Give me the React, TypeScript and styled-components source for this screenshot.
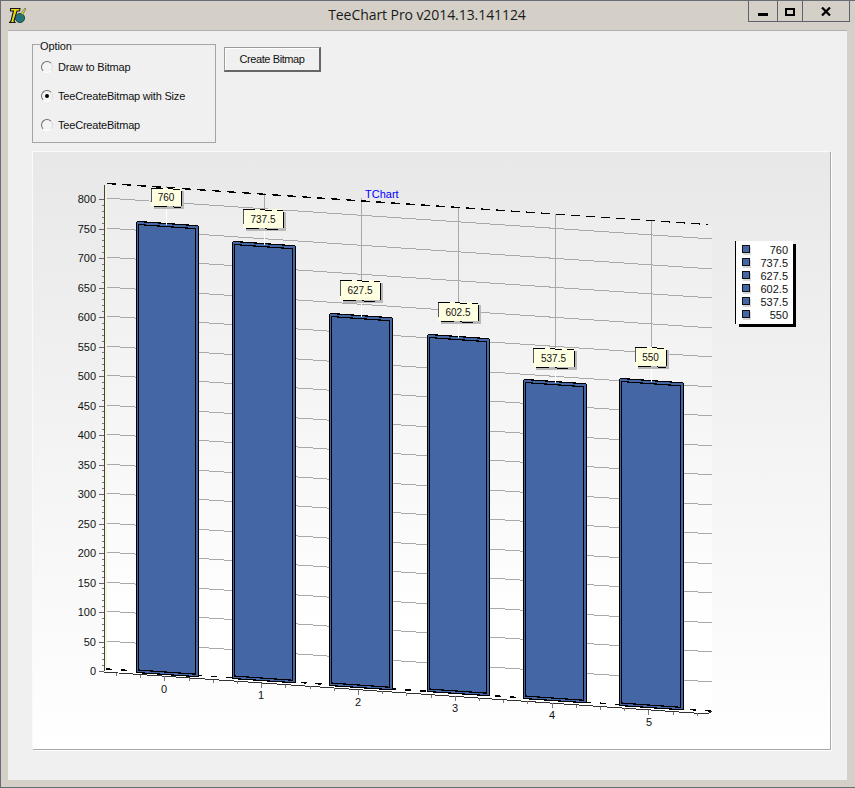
import {FC} from 'react';
import styled, {createGlobalStyle} from 'styled-components';

const GlobalStyle = createGlobalStyle`
  html, body {
    margin: 0;
    padding: 0;
    background: #d4d0c8;
  }
`;

const UI_FONT = `'Liberation Sans', Arial, sans-serif`;
const BAR_BLUE = '#4466a4';
const GRID_GREY = '#a9a9a9';

const OPTIONS = [
  {label: 'Draw to Bitmap', checked: false},
  {label: 'TeeCreateBitmap with Size', checked: true},
  {label: 'TeeCreateBitmap', checked: false},
];

// All chart coordinates are page coordinates, the svg viewBox starts at the panel's inner corner
const ox = 33;
const oy = 152;

interface BarSpec {
  value: string;
  left: number;
  right: number;
  top: number;
  bottom: number;
  tickX: number;
  tickY: number;
  box: [number, number, number, number];
  stem: number;
  wallTop: number;
}

const BARS: BarSpec[] = [
  {value: '760', left: 136, right: 198, top: 223, bottom: 672, tickX: 164, tickY: 693, box: [151, 188, 181, 206], stem: 166, wallTop: 186},
  {value: '737.5', left: 232, right: 295, top: 243, bottom: 678, tickX: 261, tickY: 699, box: [243, 209, 283, 228], stem: 264, wallTop: 193},
  {value: '627.5', left: 329, right: 392, top: 315, bottom: 685, tickX: 358, tickY: 706, box: [340, 280, 380, 300], stem: 361, wallTop: 198},
  {value: '602.5', left: 427, right: 489, top: 336, bottom: 691, tickX: 455, tickY: 712, box: [438, 302, 478, 321], stem: 458, wallTop: 207},
  {value: '537.5', left: 523, right: 586, top: 381, bottom: 698, tickX: 552, tickY: 719, box: [533, 348, 574, 367], stem: 555, wallTop: 214},
  {value: '550', left: 619, right: 683, top: 380, bottom: 705, tickX: 649, tickY: 726, box: [635, 347, 666, 366], stem: 651, wallTop: 220},
];

const yFor = (v: number) => Math.round(671 - (v / 800) * 472);
const SLOPE = 0.0675;

const YAxis: FC = () => {
  const majors = Array.from({length: 17}, (_, i) => i * 50);
  const minors = Array.from({length: 80}, (_, i) => i * 10).filter(v => v % 50 !== 0);
  return (
    <g shapeRendering="crispEdges">
      <rect x={105 - ox} y={186 - oy} width={2} height={484} fill="#f6f3d8" />
      <line x1={104.5 - ox} y1={185 - oy} x2={104.5 - ox} y2={672 - oy} stroke="#444" />
      {majors.map(v => (
        <g key={v}>
          <line x1={99 - ox} y1={yFor(v) - oy + 0.5} x2={104 - ox} y2={yFor(v) - oy + 0.5} stroke="#666" />
          <ChartText x={96 - ox} y={yFor(v) - oy + 4} textAnchor="end">
            {v}
          </ChartText>
        </g>
      ))}
      {minors.map(v => (
        <line key={v} x1={102 - ox} y1={yFor(v) - oy + 0.5} x2={104 - ox} y2={yFor(v) - oy + 0.5} stroke="#777" />
      ))}
    </g>
  );
};

const GridLines: FC = () => (
  <g shapeRendering="crispEdges">
    {Array.from({length: 16}, (_, i) => (i + 1) * 50).map(v => {
      const y = yFor(v) - 1;
      return (
        <line
          key={v}
          x1={105 - ox}
          y1={y - oy}
          x2={712 - ox}
          y2={y + 607 * SLOPE - oy}
          stroke={GRID_GREY}
        />
      );
    })}
    {BARS.map(b => (
      <line
        key={b.value}
        x1={b.stem + 0.5 - ox}
        y1={b.wallTop - oy}
        x2={b.stem + 0.5 - ox}
        y2={b.box[1] - oy}
        stroke={GRID_GREY}
      />
    ))}
  </g>
);

const Floor: FC = () => {
  const ticks = Array.from({length: 25}, (_, i) => 116.5 + i * 24.2);
  return (
    <g shapeRendering="crispEdges">
      <polygon
        points={`${105 - ox},${670 - oy} ${712 - ox},${711 - oy} ${708 - ox},${715 - oy} ${104 - ox},${672 - oy}`}
        fill="#fff"
      />
      <line
        x1={106 - ox}
        y1={669 - oy}
        x2={712 - ox}
        y2={711 - oy}
        stroke="#000"
        strokeWidth={1.6}
        strokeDasharray="6 9"
      />
      <line x1={104 - ox} y1={672 - oy} x2={708 - ox} y2={714 - oy} stroke="#333" />
      <line x1={708 - ox} y1={714 - oy} x2={712 - ox} y2={711 - oy} stroke="#333" />
      {ticks.map((x, i) => {
        const y = 672 + (x - 104) * 0.0695;
        const major = (i - 2) % 4 === 0;
        return (
          <line
            key={x}
            x1={x - ox}
            y1={y - oy}
            x2={x - ox}
            y2={y + (major ? 5 : 3) - oy}
            stroke="#777"
          />
        );
      })}
    </g>
  );
};

const Bar: FC<{bar: BarSpec}> = ({bar}) => {
  const l = bar.left - ox;
  const r = bar.right - ox;
  const t = bar.top - oy;
  const b = bar.bottom - oy;
  const rise = (r - l) * 0.068;
  const height = b - t;
  return (
    <g shapeRendering="crispEdges">
      <polygon
        points={`${l + 2},${t - 1} ${r + 1},${t - 1 + rise} ${r + 1},${b + rise + 1} ${l},${b + 1} ${l},${t}`}
        fill={BAR_BLUE}
      />
      <rect x={l} y={t} width={1} height={height} fill="#000" />
      <rect x={l + 2} y={t + 1} width={1} height={height - 3} fill="#000" />
      <rect x={r - 3} y={t + rise + 1} width={1} height={height - 3} fill="#000" />
      <rect x={r} y={t + rise - 1} width={1} height={height + 2} fill="#000" />
      <g stroke="#000" strokeWidth={1.2}>
        <line x1={l} y1={t - 0.5} x2={l + 2} y2={t - 1.5} />
        <line x1={l + 2} y1={t - 1.5} x2={r} y2={t - 1.5 + rise} />
        <line x1={l + 2} y1={t + 1.5} x2={r - 2} y2={t + 1.5 + rise} />
        <line x1={l} y1={b + 0.5} x2={r} y2={b + 0.5 + rise} />
        <line x1={l + 2} y1={b - 2} x2={r - 2} y2={b - 2 + rise} />
      </g>
    </g>
  );
};

const ValueLabel: FC<{bar: BarSpec}> = ({bar}) => {
  const [x1, y1, x2, y2] = bar.box;
  const x = x1 - ox;
  const y = y1 - oy;
  const w = x2 - x1;
  const h = y2 - y1;
  const rise = w * 0.045;
  return (
    <g>
      <g shapeRendering="crispEdges">
        <line x1={bar.stem + 0.5 - ox} y1={y + h} x2={bar.stem + 0.5 - ox} y2={bar.top + 2 - oy} stroke="#fff" />
        <rect x={x + 3} y={y + 3} width={w} height={h} fill="#b9b9b9" />
        <rect x={x} y={y} width={w} height={h} fill="#ffffe1" />
        <line x1={x + 0.5} y1={y} x2={x + 0.5} y2={y + h - 4} stroke="#555" />
        <line x1={x + w + 0.5} y1={y + 3} x2={x + w + 0.5} y2={y + h} stroke="#000" />
        <line x1={x} y1={y} x2={x + w} y2={y + rise} stroke="#000" strokeDasharray="12 5" />
        <line x1={x + 3} y1={y + h} x2={x + w} y2={y + h + rise} stroke="#000" strokeDasharray="13 6" />
      </g>
      <LabelText x={x + w / 2} y={y + h / 2 + 4} textAnchor="middle">
        {bar.value}
      </LabelText>
    </g>
  );
};

const Legend: FC = () => {
  const x = 736 - ox;
  const y = 241 - oy;
  return (
    <g shapeRendering="crispEdges">
      <rect x={x + 3} y={y + 3} width={57} height={83} fill="#000" />
      <rect x={x} y={y} width={57} height={83} fill="#fff" />
      <line x1={x - 0.5} y1={y} x2={x - 0.5} y2={y + 83} stroke="#000" />
      {BARS.map((b, i) => {
        const cy = 250 + i * 13 - oy;
        return (
          <g key={b.value}>
            <rect x={x + 7} y={cy - 3} width={8} height={8} fill="#d8d8d8" />
            <rect x={x + 6.5} y={cy - 4.5} width={7} height={7} fill={BAR_BLUE} stroke="#111" />
            <ChartText x={788 - ox} y={cy + 4} textAnchor="end">
              {b.value}
            </ChartText>
          </g>
        );
      })}
    </g>
  );
};

const TeeChart: FC = () => (
  <ChartSvg width={797} height={597} viewBox="0 0 797 597">
    <defs>
      <linearGradient id="wall" x1="0" y1="0" x2="0" y2="1">
        <stop offset="0" stopColor="#ececec" />
        <stop offset="0.85" stopColor="#ffffff" />
        <stop offset="1" stopColor="#ffffff" />
      </linearGradient>
    </defs>
    <polygon
      points={`${105 - ox},${185 - oy} ${712 - ox},${226 - oy} ${712 - ox},${711 - oy} ${105 - ox},${670 - oy}`}
      fill="url(#wall)"
    />
    <GridLines />
    <line
      x1={107 - ox}
      y1={183.5 - oy}
      x2={708 - ox}
      y2={224.5 - oy}
      stroke="#000"
      strokeWidth={1.3}
      shapeRendering="crispEdges"
      strokeDasharray="9 6"
    />
    <TitleText x={365 - ox} y={198 - oy}>
      TChart
    </TitleText>
    <YAxis />
    <Floor />
    {BARS.map(b => (
      <Bar key={b.value} bar={b} />
    ))}
    {BARS.map(b => (
      <ValueLabel key={b.value} bar={b} />
    ))}
    {BARS.map((b, i) => (
      <ChartText key={b.value} x={b.tickX - ox} y={b.tickY - oy} textAnchor="middle">
        {i}
      </ChartText>
    ))}
    <Legend />
  </ChartSvg>
);

const AppIcon: FC = () => (
  <svg width={18} height={18} viewBox="0 0 18 18">
    <path d="M1.5 1.5h9.5l-.5 2.5H8L5 14l1 1.5H.5L2 14 4.5 4h-3z" fill="#e8d80c" stroke="#151515" strokeWidth={1.1} />
    <circle cx={11} cy={11} r={4.6} fill="#1f7d5c" stroke="#12304a" strokeWidth={0.8} />
    <path d="M8.5 9l3.5 1-1 4-2.5-2z" fill="#2c5fb6" />
    <path d="M12 6.5L16 1l.8 1L13.5 8z" fill="#e8e232" stroke="#333" strokeWidth={0.5} />
  </svg>
);

const App: FC = () => (
  <>
    <GlobalStyle />
    <Window>
      <TitleBar>
        <IconSlot>
          <AppIcon />
        </IconSlot>
        <Title>TeeChart Pro v2014.13.141124</Title>
        <WindowButtons>
          <WindowButton $width={28}>
            <svg width={10} height={8}>
              <rect y={5} width={10} height={3} fill="#000" />
            </svg>
          </WindowButton>
          <WindowButton $width={25}>
            <svg width={10} height={8}>
              <rect x={1} y={1} width={8} height={6} fill="none" stroke="#000" strokeWidth={2} />
            </svg>
          </WindowButton>
          <WindowButton $width={47}>
            <svg width={10} height={9}>
              <path d="M1 0.5L9 8.5M9 0.5L1 8.5" stroke="#000" strokeWidth={2.2} fill="none" />
            </svg>
          </WindowButton>
        </WindowButtons>
      </TitleBar>
      <Client>
        <TopRow>
          <OptionGroup>
            <OptionLegend>Option</OptionLegend>
            {OPTIONS.map(o => (
              <RadioRow key={o.label}>
                <RadioDot $checked={o.checked} />
                {o.label}
              </RadioRow>
            ))}
          </OptionGroup>
          <CreateButton>Create Bitmap</CreateButton>
        </TopRow>
        <ChartPanel>
          <TeeChart />
        </ChartPanel>
      </Client>
    </Window>
  </>
);

const Window = styled.div`
  box-sizing: border-box;
  width: 855px;
  height: 788px;
  display: flex;
  flex-direction: column;
  background: #d4d0c8;
  border-top: 1px solid #696c74;
  border-left: 1px solid #696c74;
  border-bottom: 1px solid #696c74;
  font-family: ${UI_FONT};
  overflow: hidden;
`;

const TitleBar = styled.div`
  height: 29px;
  display: grid;
  grid-template-columns: 1fr auto 1fr;
  align-items: start;
  flex: none;
`;

const IconSlot = styled.div`
  padding: 6px 0 0 8px;
`;

const Title = styled.div`
  font-family: 'Open Sans', sans-serif;
  font-size: 14px;
  line-height: 28px;
  letter-spacing: -0.07px;
  padding-right: 2px;
  color: #1a1a1a;
  white-space: nowrap;
`;

const WindowButtons = styled.div`
  justify-self: end;
  display: flex;
  margin-right: 5px;
  height: 21px;
  border: 1px solid #5f626b;
  border-top: none;
  box-sizing: border-box;
`;

const WindowButton = styled.div<{$width: number}>`
  width: ${({$width}) => $width}px;
  display: flex;
  align-items: center;
  justify-content: center;
  padding-top: 1px;
  box-sizing: border-box;

  & + & {
    border-left: 1px solid #5f626b;
  }
`;

const Client = styled.div`
  flex: none;
  box-sizing: border-box;
  width: 839px;
  height: 750px;
  margin-left: 7px;
  padding: 13px 16px 0 24px;
  background: #f0f0f0;
  border-top: 1px solid #aeaeae;
  display: flex;
  flex-direction: column;
  gap: 8px;
`;

const TopRow = styled.div`
  display: flex;
  align-items: flex-start;
  gap: 8px;
  flex: none;
`;

const OptionGroup = styled.div`
  position: relative;
  box-sizing: border-box;
  width: 184px;
  height: 99px;
  padding: 7px 0 0 8px;
  border: 1px solid #a4a4a4;
  display: flex;
  flex-direction: column;
`;

const OptionLegend = styled.span`
  position: absolute;
  top: -5px;
  left: 7px;
  font-size: 11px;
  line-height: 12px;
  letter-spacing: -0.1px;
  color: #111;
  background: #f0f0f0;
`;

const RadioRow = styled.div`
  height: 29px;
  display: flex;
  align-items: center;
  gap: 5px;
  font-size: 11px;
  letter-spacing: -0.2px;
  color: #111;
  white-space: nowrap;
`;

const RadioDot = styled.span<{$checked: boolean}>`
  box-sizing: border-box;
  width: 12px;
  height: 12px;
  border-radius: 50%;
  background: #f4f4f4;
  border: 1.5px solid;
  border-color: #6e6e6e #dcdcdc #ffffff #6e6e6e;
  display: flex;
  align-items: center;
  justify-content: center;

  &::after {
    content: '';
    display: ${({$checked}) => ($checked ? 'block' : 'none')};
    width: 4px;
    height: 4px;
    border-radius: 50%;
    background: #000;
  }
`;

const CreateButton = styled.button`
  box-sizing: border-box;
  width: 97px;
  height: 25px;
  margin-top: 3px;
  padding: 0;
  font-family: inherit;
  font-size: 11px;
  letter-spacing: -0.4px;
  color: #111;
  background: #f0f0f0;
  border-style: solid;
  border-width: 1px 2px 2px 1px;
  border-color: #9a9a9a #666 #666 #9a9a9a;
  box-shadow: inset 1px 1px 0 #fff;
`;

const ChartPanel = styled.div`
  box-sizing: border-box;
  width: 798px;
  height: 598px;
  flex: none;
  background: linear-gradient(#e8e8e8, #ffffff);
  border-top: 1px solid #fafafa;
  border-left: 1px solid #fafafa;
  box-shadow: 1px 1px 0 #a8a8a8, 2px 2px 0 #fff;
`;

const ChartSvg = styled.svg`
  display: block;
`;

const ChartText = styled.text`
  font-family: ${UI_FONT};
  font-size: 11px;
  fill: #111;
`;

const LabelText = styled.text`
  font-family: ${UI_FONT};
  font-size: 10px;
  fill: #111;
`;

const TitleText = styled.text`
  font-family: ${UI_FONT};
  font-size: 11px;
  fill: #0000ff;
`;

export default App;
